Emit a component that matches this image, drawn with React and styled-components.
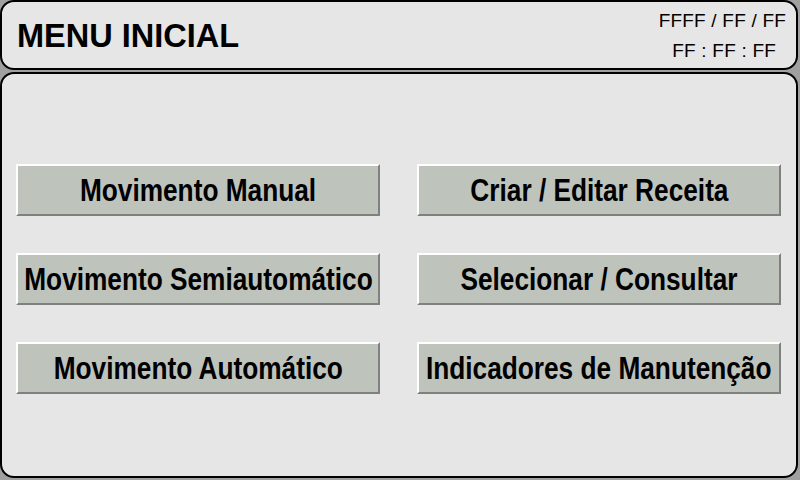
import styled, { createGlobalStyle } from "styled-components";

const GlobalStyle = createGlobalStyle`
html, body {
  margin: 0;
  padding: 0;
  background: #a0a0a0;
}
* {
  box-sizing: border-box;
}
`;

const buttons = [
    "Movimento Manual",
    "Criar / Editar Receita",
    "Movimento Semiautomático",
    "Selecionar / Consultar",
    "Movimento Automático",
    "Indicadores de Manutenção",
];

const App = () => {
    return (
        <Screen>
            <GlobalStyle />
            <Header>
                <Title>MENU INICIAL</Title>
                <Clock>
                    <ClockLine>FFFF / FF / FF</ClockLine>
                    <ClockLine $indent={10}>FF : FF : FF</ClockLine>
                </Clock>
            </Header>
            <Body>
                <Grid>
                    {buttons.map((label) => (
                        <MenuButton key={label}>
                            <Label>{label}</Label>
                        </MenuButton>
                    ))}
                </Grid>
            </Body>
        </Screen>
    );
};

const Screen = styled.div`
width: 800px;
height: 480px;
display: flex;
flex-direction: column;
gap: 2px;
padding: 0 2px 2px 0;
background: #a0a0a0;
font-family: "Liberation Sans", Arial, sans-serif;
`;

const Header = styled.header`
height: 70px;
flex-shrink: 0;
background: #e6e6e6;
border: 2px solid #000;
border-radius: 14px;
display: flex;
align-items: center;
justify-content: space-between;
padding: 0 10px 0 15px;
`;

const Title = styled.h1`
margin: 0;
font-size: 32.5px;
font-weight: bold;
color: #000;
padding-top: 2px;
`;

const Clock = styled.div`
display: flex;
flex-direction: column;
align-items: flex-end;
gap: 10px;
padding-top: 1px;
`;

const ClockLine = styled.div`
font-size: 19px;
color: #000;
line-height: 20px;
letter-spacing: 0.2px;
margin-right: ${(p) => p.$indent || 0}px;
`;

const Body = styled.main`
flex: 1;
background: #e6e6e6;
border: 2px solid #000;
border-radius: 14px;
padding: 90px 15px 0 14px;
`;

const Grid = styled.div`
display: grid;
grid-template-columns: 364px 364px;
column-gap: 37px;
row-gap: 37px;
`;

const MenuButton = styled.button`
height: 52px;
padding: 0;
background: #bec3bc;
border-style: solid;
border-width: 2px;
border-color: #ffffff #808080 #808080 #ffffff;
display: flex;
align-items: center;
justify-content: center;
overflow: hidden;
cursor: pointer;
`;

const Label = styled.span`
display: inline-block;
font-family: "Liberation Sans", Arial, sans-serif;
font-size: 32px;
font-weight: bold;
color: #000;
white-space: nowrap;
transform: scaleX(0.82);
padding-top: 1px;
`;

export default App;
